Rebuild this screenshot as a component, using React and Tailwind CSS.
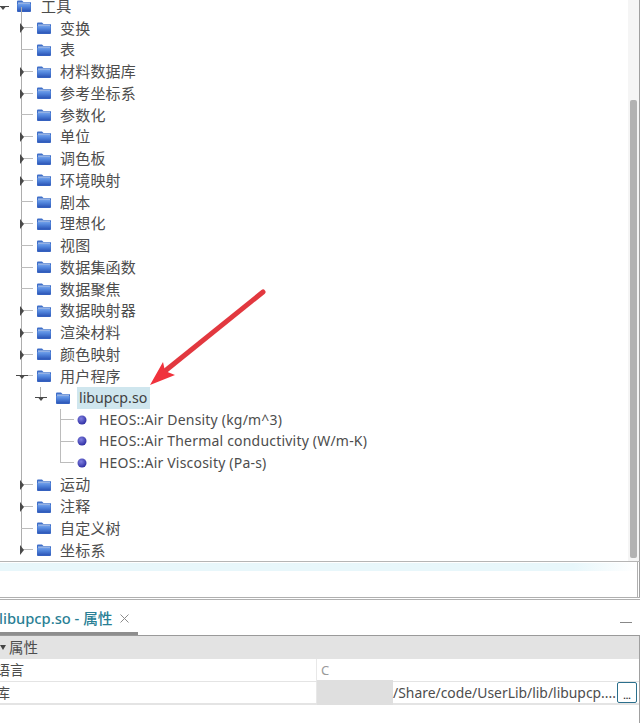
const cjk = "font-['Noto_Sans','Noto_Sans_CJK_SC',sans-serif]";

function Folder() {
  return (
    <svg width="16" height="14" viewBox="0 0 16 14" className="shrink-0">
      <defs>
        <linearGradient id="fg" x1="0" y1="0" x2="0" y2="1">
          <stop offset="0" stopColor="#6f9fea" />
          <stop offset="0.4" stopColor="#4f82da" />
          <stop offset="1" stopColor="#2a52b4" />
        </linearGradient>
      </defs>
      <path d="M1 2.5 Q1 1.5 2 1.5 H6 L7.5 3 H14 Q15 3 15 4 V12 Q15 13 14 13 H2 Q1 13 1 12 Z" fill="#3f6fc9" />
      <path d="M1.5 5 H14.5 V12 Q14.5 12.6 14 12.6 H2 Q1.5 12.6 1.5 12 Z" fill="url(#fg)" />
      <path d="M2 3.6 H14 V4.6 H2 Z" fill="#cfe0f8" />
    </svg>
  );
}

function Dot() {
  return (
    <svg width="10" height="10" viewBox="0 0 10 10" className="shrink-0">
      <defs>
        <radialGradient id="dg" cx="0.4" cy="0.35" r="0.7">
          <stop offset="0" stopColor="#8080e0" />
          <stop offset="1" stopColor="#2a2aa0" />
        </radialGradient>
      </defs>
      <circle cx="5" cy="5" r="4.5" fill="url(#dg)" />
    </svg>
  );
}

function Right({ x }) {
  return (
    <svg width="4" height="10" viewBox="0 0 4 10" className="absolute top-[6px]" style={{ left: x }}>
      <path d="M0 0 L4 5 L0 10 Z" fill="#4a4a4a" />
    </svg>
  );
}

function Down({ x }) {
  return (
    <svg width="12" height="5" viewBox="0 0 12 5" className="absolute top-[10px]" style={{ left: x }}>
      <path d="M0 0 H12 V1 H8.5 L6 4 L3.5 1 H0 Z" fill="#4a4a4a" />
    </svg>
  );
}

const items = [
  ["工具", "root"],
  ["变换", "c"],
  ["表", "l"],
  ["材料数据库", "c"],
  ["参考坐标系", "c"],
  ["参数化", "l"],
  ["单位", "c"],
  ["调色板", "c"],
  ["环境映射", "c"],
  ["剧本", "l"],
  ["理想化", "c"],
  ["视图", "l"],
  ["数据集函数", "l"],
  ["数据聚焦", "l"],
  ["数据映射器", "c"],
  ["渲染材料", "c"],
  ["颜色映射", "c"],
  ["用户程序", "o"],
];

function Row({ label, kind }) {
  const root = kind === "root";
  return (
    <div className={`relative flex h-[21.76px] items-center ${root ? "pl-[16px]" : "pl-[36px]"}`}>
      {!root && <span className="absolute left-[21px] top-0 h-full w-px bg-[#adadad]" />}
      {root && <span className="absolute left-[21px] top-[11px] h-[11px] w-px bg-[#adadad]" />}
      {!root && <span className="absolute left-[21px] top-[10px] h-px w-[12px] bg-[#bcbcbc]" />}
      {kind === "c" && <Right x={20} />}
      {kind === "o" && <Down x={16} />}
      {root && <Down x={-3} />}
      <Folder />
      <span className={`${root ? "ml-[9px]" : "ml-[8px]"} text-[15px] leading-none tracking-[0.2px] text-[#4d4d4d]`}>{label}</span>
    </div>
  );
}

function Leaf({ label, last }) {
  return (
    <div className="relative flex h-[21.76px] items-center pl-[77px]">
      <span className="absolute left-[21px] top-0 h-full w-px bg-[#adadad]" />
      <span className={`absolute left-[60px] top-0 w-px bg-[#bcbcbc] ${last ? "h-[11px]" : "h-full"}`} />
      <span className="absolute left-[60px] top-[10px] h-px w-[14px] bg-[#bcbcbc]" />
      <Dot />
      <span className="ml-[12px] whitespace-nowrap text-[14px] leading-none tracking-[0.2px] text-[#4d4d4d]">{label}</span>
    </div>
  );
}

function Arrow() {
  return (
    <svg width="124" height="104" viewBox="0 0 124 104" className="absolute left-[146px] top-[286px]">
      <path d="M117 6 L19 85" stroke="#e2383f" strokeWidth="5" strokeLinecap="round" fill="none" />
      <path d="M4 99 L17 76 L19 85 L29 89 Z" fill="#f0323c" />
    </svg>
  );
}

export default function App() {
  return (
    <div className={`relative h-[723px] w-[640px] overflow-hidden bg-white ${cjk}`}>
      <div className="flex h-[562px] border-b border-[#b5b5b5]">
        <div className="mt-[-4.5px] min-w-0 flex-1">
          {items.map(([l, k]) => (
            <Row key={l} label={l} kind={k} />
          ))}
          <div className="relative flex h-[21.76px] items-center pl-[55px]">
            <span className="absolute left-[21px] top-0 h-full w-px bg-[#adadad]" />
            <span className="absolute left-[40px] top-0 h-[11px] w-px bg-[#adadad]" />
            <Down x={35} />
            <Folder />
            <span className="ml-[6px] flex h-[22px] items-center bg-[#cfe6ee] pl-[2px] pr-[3px] text-[14.2px] leading-none text-[#3f3f3f]">libupcp.so</span>
          </div>
          <Leaf label="HEOS::Air Density (kg/m^3)" />
          <Leaf label="HEOS::Air Thermal conductivity (W/m-K)" />
          <Leaf label="HEOS::Air Viscosity (Pa-s)" last />
          <Row label="运动" kind="c" />
          <Row label="注释" kind="c" />
          <Row label="自定义树" kind="l" />
          <div className="relative flex h-[21.76px] items-center pl-[36px]">
            <span className="absolute left-[21px] top-0 h-[11px] w-px bg-[#adadad]" />
            <span className="absolute left-[21px] top-[10px] h-px w-[12px] bg-[#bcbcbc]" />
            <Right x={20} />
            <Folder />
            <span className="ml-[8px] text-[15px] leading-none tracking-[0.2px] text-[#4d4d4d]">坐标系</span>
          </div>
        </div>
        <div className="h-full w-[12px] shrink-0 border-r border-[#a0a0a0] bg-[#f5f5f5] pt-[100px] pl-[2px]">
          <div className="h-[458px] w-[7px] rounded-[2px] bg-[#b2b2b2]" />
        </div>
      </div>

      <div className="h-[35px] border-r border-[#a0a0a0]">
        <div className="mr-px h-full border-r border-[#b0b0b0] pt-[1px]">
          <div className="h-[8px] bg-gradient-to-r from-[#e8f7fb] from-90% to-white" />
        </div>
      </div>
      <div className="h-[3px] border-y border-[#b0b0b0]" />

      <div className="flex h-[36px] items-end border-b border-[#9a9a9a]">
        <div className="flex h-[35px] w-[138px] items-center border-b-[3px] border-[#8e8e8e] pt-[5px]">
          <span className="ml-[-1px] whitespace-nowrap text-[14.7px] font-medium leading-none text-[#2a7f95]">libupcp.so - 属性</span>
          <svg width="9" height="9" viewBox="0 0 9 9" className="ml-[7px]">
            <path d="M0.5 0.5 L8.5 8.5 M8.5 0.5 L0.5 8.5" stroke="#8c8c8c" strokeWidth="1" />
          </svg>
        </div>
        <div className="flex-1" />
        <div className="mb-[12px] mr-[8px] h-px w-[12px] bg-[#888]" />
      </div>

      <div className="h-[88px] border-r border-[#a0a0a0]">
        <div className="flex h-[23px] items-center bg-[#e3e3e3]">
          <svg width="6" height="5" viewBox="0 0 6 5" className="mr-[3px]"><path d="M0 0 H6 L3 5 Z" fill="#444" /></svg>
          <span className="text-[14.5px] leading-none text-[#4d4d4d]">属性</span>
        </div>
        <div className="flex h-[23px] items-center border-b border-[#e4e4e4]">
          <div className="flex w-[316px] items-center overflow-hidden text-[14px] leading-none text-[#4d4d4d]"><span className="ml-[-4px]">语言</span></div>
          <div className="flex h-full flex-1 items-center border-l border-[#e8e8e8] pl-[4px] text-[13px] leading-none text-[#9a9a9a]">C</div>
        </div>
        <div className="flex h-[23px] items-center border-b-2 border-[#e4e4e4]">
          <div className="flex w-[316px] items-center overflow-hidden text-[14px] leading-none text-[#4d4d4d]"><span className="ml-[-4px]">库</span></div>
          <div className="flex h-full min-w-0 flex-1 items-center border-l border-[#e8e8e8]">
            <div className="h-[25px] w-[76px] shrink-0 bg-[#dfdfdf]" />
            <span className="whitespace-nowrap text-[13.9px] leading-none text-[#4d4d4d]">/Share/code/UserLib/lib/libupcp....</span>
            <div className="ml-auto mr-[2px] flex h-[21px] w-[20px] shrink-0 items-end justify-center rounded-[2px] border border-[#2b6f8c] pb-[2px] text-[9px] font-bold leading-none text-[#333]">...</div>
          </div>
        </div>
      </div>
      <Arrow />
    </div>
  );
}
